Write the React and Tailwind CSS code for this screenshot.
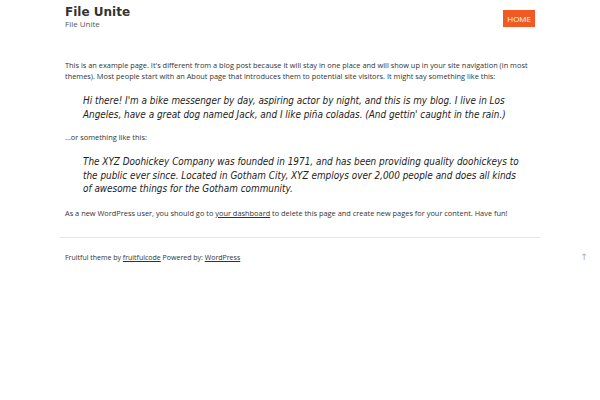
export default function App() {
  const body = { fontFamily: '"Open Sans", "DejaVu Sans", sans-serif' }
  const title = { fontFamily: '"DejaVu Sans", sans-serif' }
  const quote = { fontFamily: '"DejaVu Sans Condensed", "DejaVu Sans", sans-serif', fontStretch: 'condensed' }

  return (
    <div className="min-h-screen bg-white text-[#333]" style={body}>
      <div className="w-[480px] mx-auto">
        <header className="flex justify-between items-start pt-[6px] px-[5px]">
          <div>
            <div className="text-[12px] font-bold leading-[13px] text-[#333]" style={title}>File Unite</div>
            <div className="text-[8px] leading-[10px] text-[#555]">File Unite</div>
          </div>
          <a className="mt-[4px] bg-[#f15a23] text-white text-[8px] leading-[17px] px-[4px] uppercase">Home</a>
        </header>

        <main className="px-[5px] pt-[31px] text-[7.4px] leading-[11px]">
          <p className="mb-[12px]">
            This is an example page. It's different from a blog post because it will stay in one place and will show up in your site navigation (in most themes). Most people start with an About page that introduces them to potential site visitors. It might say something like this:
          </p>
          <blockquote className="pl-[18px] pr-[8px] italic text-[9.9px] leading-[13.5px] text-[#222] mb-[11px]" style={quote}>
            Hi there! I'm a bike messenger by day, aspiring actor by night, and this is my blog. I live in Los Angeles, have a great dog named Jack, and I like piña coladas. (And gettin' caught in the rain.)
          </blockquote>
          <p className="mb-[12px]">...or something like this:</p>
          <blockquote className="pl-[18px] pr-[8px] italic text-[9.9px] leading-[13.5px] text-[#222] mb-[12px]" style={quote}>
            The XYZ Doohickey Company was founded in 1971, and has been providing quality doohickeys to the public ever since. Located in Gotham City, XYZ employs over 2,000 people and does all kinds of awesome things for the Gotham community.
          </blockquote>
          <p>
            As a new WordPress user, you should go to <a className="underline">your dashboard</a> to delete this page and create new pages for your content. Have fun!
          </p>
        </main>

        <footer className="mt-[18px] border-t border-[#e5e5e5] pt-[15px] px-[5px] text-[7px] leading-[10px]">
          Fruitful theme by <a className="underline">fruitfulcode</a> Powered by: <a className="underline">WordPress</a>
        </footer>
      </div>
      <div className="absolute right-[12px] top-[250px] text-[#aaa] text-[9px]">↑</div>
    </div>
  )
}
